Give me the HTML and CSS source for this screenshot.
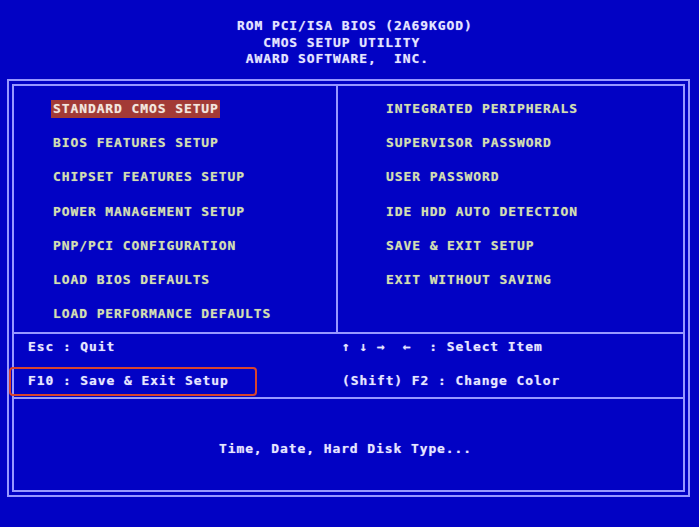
FILE: index.html
```html
<!DOCTYPE html>
<html lang="en">
<head>
  <meta charset="UTF-8" />
  <meta name="viewport" content="width=device-width, initial-scale=1.0"/>
  <title>CMOS Setup Utility</title>
  <link rel="stylesheet" href="styles.css">
</head>
<body>

<pre class="title">ROM PCI/ISA BIOS (2A69KGOD)
   CMOS SETUP UTILITY
 AWARD SOFTWARE,  INC.</pre>

<div class="frame">
  <div class="box">

    <!-- main menu, two columns -->
    <div class="menu">
      <ul class="col col-left">
        <li><span class="selected">STANDARD CMOS SETUP</span></li>
        <li>BIOS FEATURES SETUP</li>
        <li>CHIPSET FEATURES SETUP</li>
        <li>POWER MANAGEMENT SETUP</li>
        <li>PNP/PCI CONFIGURATION</li>
        <li>LOAD BIOS DEFAULTS</li>
        <li>LOAD PERFORMANCE DEFAULTS</li>
      </ul>
      <ul class="col col-right">
        <li>INTEGRATED PERIPHERALS</li>
        <li>SUPERVISOR PASSWORD</li>
        <li>USER PASSWORD</li>
        <li>IDE HDD AUTO DETECTION</li>
        <li>SAVE &amp; EXIT SETUP</li>
        <li>EXIT WITHOUT SAVING</li>
      </ul>
    </div>

    <!-- key help -->
    <div class="keys">
      <span>Esc : Quit</span>
      <span>↑ ↓ →  ←  : Select Item</span>
      <span class="marked">F10 : Save &amp; Exit Setup</span>
      <span>(Shift) F2 : Change Color</span>
    </div>

    <div class="desc">Time, Date, Hard Disk Type...</div>

  </div>
</div>

</body>
</html>
```

FILE: styles.css
```css
body {
  margin: 0;
  padding: 0;
  background-color: #0202c4;
  color: #e6e6ff;
  font-family: "DejaVu Sans Mono", "Liberation Mono", monospace;
  font-weight: bold;
  font-size: 13px;
  letter-spacing: 0.9px;
  height: 527px;
  overflow: hidden;
}

.title {
  margin: 0;
  padding: 18px 0 0 237px;
  height: 61px;
  font: inherit;
  line-height: 16.5px;
  color: #e4e4ff;
  text-shadow: 0 0 1px rgba(230, 230, 255, 0.6);
}

/* double line border */
.frame {
  margin: 0 9px 0 7px;
  border: 2px solid #9898ff;
  padding: 3px;
}

.box {
  border: 2px solid #9898ff;
}

.menu {
  display: grid;
  grid-template-columns: 324px 1fr;
  height: 246px;
  border-bottom: 2px solid #9898ff;
}

.col {
  list-style: none;
  margin: 0;
  padding: 6px 0 0 0;
  color: #d2dfb2;
  text-shadow: 0 0 1px rgba(210, 223, 178, 0.6);
}

.col li {
  line-height: 34.2px;
  white-space: pre;
}

.col-left {
  padding-left: 39px;
  border-right: 2px solid #9898ff;
}

.col-right {
  padding-left: 48px;
}

.selected {
  background-color: #a33a36;
  color: #f4e6e0;
  padding: 1px 1px 2px 2px;
  margin-left: -2px;
}

.keys {
  display: grid;
  grid-template-columns: 314px 1fr;
  row-gap: 14px;
  padding: 3px 0 6px 14px;
  height: 54px;
  line-height: 20px;
  white-space: pre;
  border-bottom: 2px solid #9898ff;
  text-shadow: 0 0 1px rgba(230, 230, 255, 0.6);
}

.marked {
  position: relative;
}

/* red callout round the F10 line */
.marked::after {
  content: "";
  position: absolute;
  left: -19px;
  top: -4px;
  width: 244px;
  height: 25px;
  border: 2px solid #d8442e;
  border-radius: 4px;
}

.desc {
  height: 91px;
  padding-top: 40px;
  box-sizing: border-box;
  line-height: 20px;
  text-align: center;
  padding-right: 6px;
  text-shadow: 0 0 1px rgba(230, 230, 255, 0.6);
}
```
